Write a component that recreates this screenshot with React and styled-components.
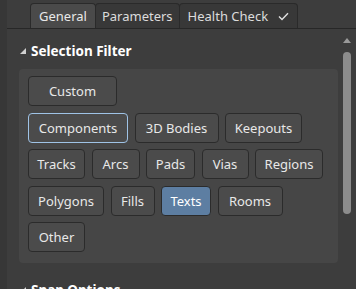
import styled, { createGlobalStyle } from "styled-components";

const GlobalStyle = createGlobalStyle`
html, body {
   margin: 0;
   padding: 0;
   background: #3d3d3d;
}
`

const Frame = styled.div`
width: 356px;
height: 289px;
overflow: hidden;
display: flex;
background: #3d3d3d;
font-family: "Noto Sans", "Open Sans", sans-serif;
color: #e6e6e6;
`
const LeftStrip = styled.div`
width: 7px;
background: #373737;
flex-shrink: 0;
`
const Main = styled.div`
flex: 1;
display: flex;
flex-direction: column;
min-width: 0;
`
const TabBar = styled.div`
height: 28px;
display: flex;
align-items: flex-end;
padding-left: 23px;
border-bottom: 1px solid #272727;
flex-shrink: 0;
`
const Tab = styled.div`
height: 24px;
display: flex;
align-items: center;
gap: 10px;
padding: 0 ${p => p.$pad || 8}px;
font-size: 13px;
border: 1px solid #2a2a2a;
border-bottom: none;
border-radius: 4px 4px 0 0;
margin-right: -1px;
background: ${p => p.$active ? "#4a4a4a" : "#383838"};
color: ${p => p.$active ? "#e8e8e8" : "#dcdcdc"};
`
const Body = styled.div`
flex: 1;
display: flex;
min-height: 0;
`
const Content = styled.div`
flex: 1;
padding-left: 12px;
`
const SectionHeader = styled.div`
display: flex;
align-items: center;
gap: 5px;
padding: ${p => p.$top}px 0 9px 1px;
font-size: 13.5px;
line-height: 18px;
font-weight: 700;
color: #ffffff;
`
const Caret = styled.svg`
width: 6px;
height: 6px;
flex-shrink: 0;
`
const Panel = styled.div`
width: 319px;
box-sizing: border-box;
background: #464646;
border-radius: 4px;
padding: 7px 9px 11px;
display: flex;
flex-direction: column;
gap: 6.5px;
`
const ButtonRow = styled.div`
display: flex;
gap: 6.5px;
`
const FilterButton = styled.div`
height: 30px;
width: ${p => p.$width}px;
box-sizing: border-box;
display: flex;
align-items: center;
justify-content: center;
font-size: 13px;
border-radius: 4px;
border: 1px solid ${p => p.$focused ? "#9fc3e6" : "#2b2b2b"};
background: ${p => p.$checked ? "#5d7ea2" : "#4b4b4b"};
color: ${p => p.$checked ? "#ffffff" : "#e8e8e8"};
`
const ScrollColumn = styled.div`
width: 18px;
flex-shrink: 0;
display: flex;
flex-direction: column;
align-items: flex-start;
padding: 9px 0 0 5px;
box-sizing: border-box;
`
const ScrollArrow = styled.svg`
width: 8px;
height: 5px;
`
const ScrollThumb = styled.div`
width: 8px;
height: 162px;
margin-top: 9px;
border-radius: 4px;
background: #8c8c8c;
`

const rows = [
   [{ label: "Custom", width: 89 }],
   [{ label: "Components", width: 100, focused: true }, { label: "3D Bodies", width: 84 }, { label: "Keepouts", width: 77 }],
   [{ label: "Tracks", width: 57 }, { label: "Arcs", width: 48 }, { label: "Pads", width: 49 }, { label: "Vias", width: 47 }, { label: "Regions", width: 68 }],
   [{ label: "Polygons", width: 76 }, { label: "Fills", width: 44 }, { label: "Texts", width: 50, checked: true }, { label: "Rooms", width: 65 }],
   [{ label: "Other", width: 57 }],
]

function Triangle() {
   return (
      <Caret viewBox="0 0 6 6">
         <path d="M6 0 L6 6 L0 6 Z" fill="#d0d0d0" />
      </Caret>
   )
}

export default function App() {
   return (
      <>
         <GlobalStyle />
         <Frame>
            <LeftStrip />
            <Main>
               <TabBar>
                  <Tab $active>General</Tab>
                  <Tab $pad={6}>Parameters</Tab>
                  <Tab>
                     Health Check
                     <svg width="11" height="9" viewBox="0 0 11 9">
                        <path d="M1 4.6 L4 7.6 L10 1.2" stroke="#e0e0e0" strokeWidth="1.4" fill="none" />
                     </svg>
                  </Tab>
               </TabBar>
               <Body>
                  <Content>
                     <SectionHeader $top={13}>
                        <Triangle />
                        Selection Filter
                     </SectionHeader>
                     <Panel>
                        {rows.map((row, i) => (
                           <ButtonRow key={i}>
                              {row.map(b => (
                                 <FilterButton
                                    key={b.label}
                                    $width={b.width}
                                    $focused={b.focused}
                                    $checked={b.checked}
                                 >
                                    {b.label}
                                 </FilterButton>
                              ))}
                           </ButtonRow>
                        ))}
                     </Panel>
                     <SectionHeader $top={18}>
                        <Triangle />
                        Snap Options
                     </SectionHeader>
                  </Content>
                  <ScrollColumn>
                     <ScrollArrow viewBox="0 0 8 5">
                        <path d="M4 0 L8 5 L0 5 Z" fill="#9a9a9a" />
                     </ScrollArrow>
                     <ScrollThumb />
                  </ScrollColumn>
               </Body>
            </Main>
         </Frame>
      </>
   )
}
